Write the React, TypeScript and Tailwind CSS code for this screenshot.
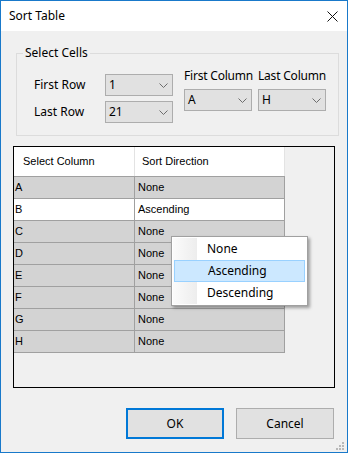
import React from 'react';

const ui = { fontFamily: '"Noto Sans", "Open Sans", sans-serif' };
const grid = { fontFamily: '"Liberation Sans", Arial, sans-serif' };

const rows: [string, string][] = [
  ['A', 'None'],
  ['B', 'Ascending'],
  ['C', 'None'],
  ['D', 'None'],
  ['E', 'None'],
  ['F', 'None'],
  ['G', 'None'],
  ['H', 'None'],
];

const Chevron = () => (
  <svg width="9" height="5" viewBox="0 0 9 5" className="shrink-0">
    <path d="M0.5 0.5 L4.5 4.5 L8.5 0.5" fill="none" stroke="#6d6d6d" strokeWidth="1" />
  </svg>
);

const Combo: React.FC<{ value: string }> = ({ value }) => (
  <div className="w-[68px] h-[22px] border border-[#adadad] bg-[#e1e1e1] flex items-center justify-between pl-[3px] pr-[4px] text-[12px] text-black">
    <span>{value}</span>
    <Chevron />
  </div>
);

const App: React.FC = () => {
  return (
    <div className="w-[348px] h-[453px] border border-[#1979ca] bg-[#f0f0f0] flex flex-col relative overflow-hidden text-black" style={ui}>
      {/* title bar */}
      <div className="h-[30px] bg-white flex items-center justify-between pl-[8px] pr-[9px] shrink-0">
        <span className="text-[12px] leading-none">Sort Table</span>
        <svg width="11" height="11" viewBox="0 0 11 11">
          <path d="M0.5 0.5 L10.5 10.5 M10.5 0.5 L0.5 10.5" stroke="#111" strokeWidth="1" />
        </svg>
      </div>

      {/* select cells group */}
      <fieldset className="ml-[15px] mt-[14px] w-[323px] border border-[#dcdcdc] px-0 pb-[12px] pt-0">
        <legend className="ml-[6px] px-[2px] text-[12px] leading-[16px]">Select Cells</legend>
        <div className="flex">
          <div className="flex flex-col gap-[5px] pt-[13px] pl-[17px]">
            <div className="flex items-center">
              <span className="w-[71px] text-[12px]">First Row</span>
              <Combo value="1" />
            </div>
            <div className="flex items-center">
              <span className="w-[71px] text-[12px]">Last Row</span>
              <Combo value="21" />
            </div>
          </div>
          <div className="flex gap-[6px] ml-[11px] pt-[7px]">
            <div className="w-[68px] flex flex-col gap-[5px]">
              <span className="text-[12px] leading-[16px] whitespace-nowrap tracking-[-0.2px]">First Column</span>
              <Combo value="A" />
            </div>
            <div className="w-[68px] flex flex-col gap-[5px]">
              <span className="text-[12px] leading-[16px] whitespace-nowrap tracking-[-0.2px]">Last Column</span>
              <Combo value="H" />
            </div>
          </div>
        </div>
      </fieldset>

      {/* grid */}
      <div className="ml-[12px] mt-[10px] w-[322px] h-[242px] border border-black bg-[#f0f0f0] relative shrink-0" style={grid}>
        <div className="flex w-[271px] h-[30px] bg-white border-b border-[#a0a0a0] text-[11px]">
          <div className="w-[121px] border-r border-[#e3e3e3] flex items-center pl-[9px]">Select Column</div>
          <div className="w-[150px] border-r border-[#e3e3e3] flex items-center pl-[7px]">Sort Direction</div>
        </div>
        {rows.map(([col, dir]) => (
          <div
            key={col}
            className={`flex w-[271px] h-[22px] border-b border-[#a0a0a0] text-[11px] ${col === 'B' ? 'bg-white' : 'bg-[#d3d3d3]'}`}
          >
            <div className="w-[121px] border-r border-[#a0a0a0] flex items-center pl-[1px]">{col}</div>
            <div className="w-[150px] border-r border-[#a0a0a0] flex items-center pl-[3px]">{dir}</div>
          </div>
        ))}

        {/* dropdown menu */}
        <div className="absolute left-[157px] top-[89px] w-[137px] h-[70px] bg-white border border-[#a0a0a0] p-[1px] shadow-[2px_2px_3px_rgba(0,0,0,0.35)]" style={ui}>
          <div className="absolute left-[1px] top-[1px] bottom-[1px] w-[24px] bg-gradient-to-r from-[#fbfbfb] to-[#ededed]" />
          {['None', 'Ascending', 'Descending'].map((item) => (
            <div
              key={item}
              className={`relative h-[22px] mx-[1px] flex items-center pl-[33px] text-[12px] ${item === 'Ascending' ? 'bg-[#cce8ff] border border-[#99d1ff] pl-[32px]' : ''}`}
            >
              {item}
            </div>
          ))}
        </div>
      </div>

      {/* buttons */}
      <div className="flex justify-end gap-[12px] pr-[13px] mt-[20px]">
        <button className="w-[98px] h-[31px] bg-[#e1e1e1] border-2 border-[#0078d7] text-[12px]">OK</button>
        <button className="w-[98px] h-[31px] bg-[#e1e1e1] border border-[#adadad] text-[12px]">Cancel</button>
      </div>

      {/* size grip */}
      <svg className="absolute right-[2px] bottom-[1px]" width="10" height="10" viewBox="0 0 10 10">
        <rect x="7" y="1" width="2" height="2" fill="#b8b8b8" />
        <rect x="4" y="4" width="2" height="2" fill="#b8b8b8" />
        <rect x="7" y="4" width="2" height="2" fill="#b8b8b8" />
        <rect x="1" y="7" width="2" height="2" fill="#b8b8b8" />
        <rect x="4" y="7" width="2" height="2" fill="#b8b8b8" />
        <rect x="7" y="7" width="2" height="2" fill="#b8b8b8" />
      </svg>
    </div>
  );
};

export default App;
